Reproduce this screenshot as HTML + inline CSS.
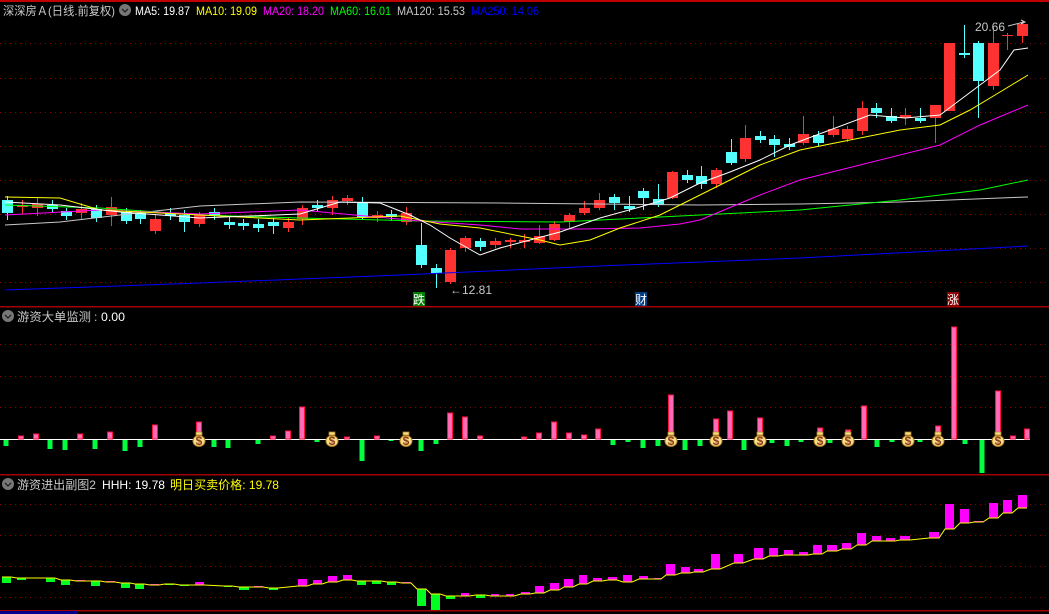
<!DOCTYPE html>
<html><head><meta charset="utf-8"><style>
html,body{margin:0;padding:0;background:#000;width:1049px;height:614px;overflow:hidden}
svg{display:block}
text{font-family:"Liberation Sans","Noto Sans CJK SC",sans-serif;font-size:12px}
</style></head><body>
<svg id="s" width="1049" height="614" xmlns="http://www.w3.org/2000/svg">
<rect width="1049" height="614" fill="#000"/>
<rect x="0" y="0" width="1049" height="2" fill="#c00000"/>
<g stroke="#900000" stroke-dasharray="1,4" stroke-width="1">
<line x1="0" y1="43.5" x2="1049" y2="43.5"/><line x1="0" y1="78.5" x2="1049" y2="78.5"/><line x1="0" y1="112.5" x2="1049" y2="112.5"/><line x1="0" y1="146.5" x2="1049" y2="146.5"/><line x1="0" y1="180.5" x2="1049" y2="180.5"/><line x1="0" y1="214.5" x2="1049" y2="214.5"/><line x1="0" y1="248.5" x2="1049" y2="248.5"/><line x1="0" y1="282.5" x2="1049" y2="282.5"/>
<line x1="0" y1="344.5" x2="1049" y2="344.5"/><line x1="0" y1="376.5" x2="1049" y2="376.5"/><line x1="0" y1="407.5" x2="1049" y2="407.5"/>
<line x1="0" y1="504.5" x2="1049" y2="504.5"/><line x1="0" y1="535.5" x2="1049" y2="535.5"/><line x1="0" y1="566.5" x2="1049" y2="566.5"/><line x1="0" y1="597.5" x2="1049" y2="597.5"/>
</g>
<rect x="0" y="306" width="1049" height="1.5" fill="#a00000"/>
<rect x="0" y="474" width="1049" height="1.5" fill="#a00000"/>
<rect x="0" y="610" width="1049" height="1.5" fill="#a00000"/>
<rect x="0" y="611" width="78" height="3" fill="#00008b"/>
<g id="main"></g>
<g id="p2"><line x1="0" y1="439.5" x2="1030" y2="439.5" stroke="#fff" stroke-width="1"/></g>
<g id="p3"></g>
<!-- headers -->
<text x="3" y="15" fill="#c8c8c8" font-size="13" textLength="112" lengthAdjust="spacingAndGlyphs">深深房Ａ(日线.前复权)</text>
<circle cx="125" cy="10" r="6" fill="#777"/><path d="M122 9l3 3 3-3" stroke="#222" fill="none" stroke-width="1.3"/>
<text x="135" y="15" fill="#fff" textLength="55" lengthAdjust="spacingAndGlyphs">MA5: 19.87</text>
<text x="196" y="15" fill="#ffff00" textLength="61" lengthAdjust="spacingAndGlyphs">MA10: 19.09</text>
<text x="263" y="15" fill="#ff00ff" textLength="61" lengthAdjust="spacingAndGlyphs">MA20: 18.20</text>
<text x="330" y="15" fill="#00ff00" textLength="61" lengthAdjust="spacingAndGlyphs">MA60: 16.01</text>
<text x="397" y="15" fill="#c8c8c8" textLength="68" lengthAdjust="spacingAndGlyphs">MA120: 15.53</text>
<text x="471" y="15" fill="#0000ff" textLength="68" lengthAdjust="spacingAndGlyphs">MA250: 14.06</text>
<circle cx="8" cy="316" r="6" fill="#777"/><path d="M5 315l3 3 3-3" stroke="#222" fill="none" stroke-width="1.3"/>
<text x="17" y="321" fill="#c8c8c8" font-size="13" textLength="74" lengthAdjust="spacingAndGlyphs">游资大单监测</text>
<text x="94" y="321" fill="#c8c8c8" font-size="13">:</text>
<text x="101" y="321" fill="#fff" font-size="13" textLength="24" lengthAdjust="spacingAndGlyphs">0.00</text>
<circle cx="8" cy="484" r="6" fill="#777"/><path d="M5 483l3 3 3-3" stroke="#222" fill="none" stroke-width="1.3"/>
<text x="17" y="489" fill="#c8c8c8" font-size="13" textLength="79" lengthAdjust="spacingAndGlyphs">游资进出副图2</text>
<text x="102" y="489" fill="#fff" font-size="13" textLength="63" lengthAdjust="spacingAndGlyphs">HHH: 19.78</text>
<text x="170" y="489" fill="#ffff00" font-size="13" textLength="109" lengthAdjust="spacingAndGlyphs">明日买卖价格: 19.78</text>
<!-- labels -->
<rect x="413" y="292" width="12" height="14" fill="#008000"/><text x="413" y="304" fill="#fff">跌</text>
<rect x="635" y="292" width="12" height="14" fill="#003c80"/><text x="635" y="304" fill="#fff">财</text>
<rect x="947" y="292" width="12" height="14" fill="#8b0000"/><text x="947" y="304" fill="#fff">涨</text>
<text x="450" y="294" fill="#c8c8c8">←12.81</text>
<text x="975" y="31" fill="#c8c8c8">20.66</text>
<path d="M1008 26l16-4m-3-2l4 2-4 2" stroke="#c8c8c8" fill="none"/>
</svg>
<script>
var NS="http://www.w3.org/2000/svg";
function el(p,t,a){var e=document.createElementNS(NS,t);for(var k in a)e.setAttribute(k,a[k]);document.getElementById(p).appendChild(e);return e;}
var R="#ff3232",C="#54ffff";
var cd=[
[7,C,200,213,196,220],[22,R,205,207,200,214],[37,R,204,208,198,216],[52,C,205,209,200,212],[66,C,211,216,208,220],
[81,R,209,213,203,220],[96,C,209,218,205,222],[111,R,207,215,197,226],[126,C,212,221,208,224],[140,C,213,219,210,224],
[155,R,219,231,215,234],[170,C,213,216,208,220],[184,C,215,222,210,232],[199,R,215,224,212,227],[214,C,212,216,208,220],
[229,C,222,225,217,229],[243,C,223,226,219,230],[258,C,224,228,219,232],[273,C,222,226,218,234],[288,R,222,228,218,232],
[302,R,208,219,205,225],[317,C,205,208,200,211],[332,R,200,208,196,215],[347,R,198,201,195,205],[362,C,203,217,197,220],
[377,R,215,218,211,222],[391,C,214,217,210,221],[406,R,213,222,207,225],[421,C,245,265,223,268],[436,C,268,273,264,288],
[450,R,250,282,248,284],[465,R,238,248,236,252],[480,C,241,247,238,251],[495,R,241,245,238,248],[510,R,240,242,238,248],
[524,R,240,242,234,248],[539,R,236,243,225,244],[554,R,224,240,221,241],[569,R,215,222,213,228],[584,R,208,213,201,215],
[599,R,200,208,193,210],[614,C,197,203,194,210],[629,C,206,209,196,212],[643,C,191,198,188,210],[658,C,199,205,184,207],
[672,R,172,198,171,199],[687,C,175,180,170,183],[701,C,176,184,166,189],[716,R,170,184,168,188],[731,C,152,163,139,165],
[745,R,138,159,125,162],[760,C,136,140,131,143],[774,C,139,145,135,157],[789,C,144,147,138,150],[803,R,134,143,116,145],
[818,C,135,143,131,146],[833,R,129,135,116,137],[847,R,129,139,126,142],[862,R,108,131,101,135],[876,C,108,113,103,118],
[891,C,116,121,108,123],[905,R,115,118,108,125],[920,C,118,121,108,123],[935,R,105,118,105,143],[949,R,43,111,43,111],
[964,C,53,55,25,58],[978,C,43,81,41,118],[993,R,43,86,27,90],[1007,R,35,36,33,50],[1022,R,24,36,21,43]];
cd.forEach(function(c){var x=c[0];
el("main","line",{x1:x+.5,x2:x+.5,y1:c[4],y2:c[5],stroke:c[1],"stroke-width":1});
el("main","rect",{x:x-5,y:c[2],width:11,height:Math.max(1,c[3]-c[2]),fill:c[1]});});
function pl(pts,col){el("main","polyline",{points:pts,fill:"none",stroke:col,"stroke-width":1});}
pl("5,290 200,283 400,275 600,266 800,258 1028,246","#0000ff");
pl("5,225 60,222 120,215 200,206 300,202 500,203 700,205 800,204 900,202 1000,198 1028,197","#c8c8c8");
pl("5,205 100,208 200,215 300,218 420,221 560,222 600,220 680,216 800,210 900,200 980,190 1028,180","#00ff00");
pl("5,215 100,210 200,214 300,210 420,221 480,225 520,229 580,229 640,228 680,224 700,220 760,195 800,180 860,165 940,145 980,125 1028,105","#ff00ff");
pl("5,197 60,198 100,210 200,215 300,220 400,216 440,224 480,228 540,240 560,245 590,240 620,228 660,215 680,205 720,185 760,165 800,150 850,140 900,130 940,125 970,110 1000,92 1028,75","#ffff00");
pl("5,202 60,205 120,212 200,218 300,214 340,202 380,203 410,215 430,225 450,238 480,255 500,248 530,240 560,232 600,218 640,207 670,198 700,183 730,172 760,160 790,145 830,130 870,115 905,118 940,115 960,100 980,85 1000,70 1014,50 1028,48","#ffffff");
var b2=[[6,-6],[21,3],[36,5],[50,-9],[65,-10],[80,5],[95,-9],[110,7],[125,-11],[140,-7],[155,14],[199,17,1],[214,-7],[228,-8],[258,-4],[273,3],[288,8],[302,32],[317,-2],[332,2,1],[347,2],[362,-21],[377,3],[391,-1],[406,2,1],[421,-11],[436,-4],[450,26],[465,22],[480,3],[524,2],[539,6],[554,17],[569,6],[584,4],[598,10],[613,-5],[628,-2],[643,-8],[658,-6],[671,44,1],[685,-10],[700,-6],[716,20,1],[730,28],[744,-10],[760,21,1],[772,-3],[787,-6],[801,-2],[820,11,1],[830,-3],[848,9,1],[864,33],[877,-7],[892,-2],[908,1,1],[920,-2],[938,13,1],[954,112],[965,-4],[982,-33],[998,48,1],[1013,3],[1027,10]];
b2.forEach(function(b){var x=b[0],h=b[1];
if(h>0){el("p2","rect",{x:x-2.5,y:439-h,width:5,height:h,fill:"#ff6ab4",stroke:"#ff1040","stroke-width":1});}
else{el("p2","rect",{x:x-2.5,y:440,width:5,height:-h,fill:"#00ff40"});}
if(b[2]){el("p2","ellipse",{cx:x,cy:441,rx:6,ry:5.5,fill:"#f8e08a",stroke:"#b08020","stroke-width":1});
el("p2","rect",{x:x-3,y:432,width:6,height:3,fill:"#f8e08a",stroke:"#b08020","stroke-width":0.8});
var t=el("p2","text",{x:x,y:445,fill:"#8b3a1a","font-size":"9","text-anchor":"middle","font-weight":"bold"});t.textContent="$";}});
var G="#00ff20",M="#ff00ff";
var b3=[[2,11,G,577,583],[17,26,G,578,580],[46,55,G,578,582],[61,70,G,580,585],[76,85,M,580,581],[91,100,G,581,586],[106,115,M,581,582],[121,130,G,583,588],[135,144,G,584,589],[150,159,M,584,585],[165,174,G,584,585],[180,189,G,585,586],[195,204,M,582,585],[224,232,G,586,587],[239,249,G,587,590],[254,263,M,586,587],[269,278,G,588,590],[298,307,M,579,586],[313,322,M,580,584],[328,337,M,576,582],[343,352,M,575,580],[357,366,G,581,585],[372,381,G,581,584],[387,396,G,582,585],[402,411,M,582,583],[417,426,G,589,606],[431,440,G,594,610],[446,455,G,596,599],[461,469,M,593,596],[476,485,G,595,598],[491,499,M,594,596],[506,514,M,594,596],[521,530,M,592,594],[535,544,M,586,593],[550,559,M,583,590],[564,573,M,579,587],[579,587,M,575,584],[593,602,M,578,581],[608,617,M,577,580],[623,632,M,575,582],[639,648,M,576,579],[654,661,M,578,579],[666,675,M,564,575],[681,690,M,567,573],[694,703,M,569,572],[711,720,M,554,569],[734,743,M,554,563],[754,763,M,548,559],[769,778,M,548,556],[784,793,M,550,555],[799,808,M,552,555],[813,822,M,545,554],[827,837,M,545,551],[842,851,M,543,549],[857,866,M,533,545],[872,881,M,536,541],[886,895,M,538,541],[900,910,M,536,540],[929,939,M,532,538],[945,954,M,504,529],[960,969,M,509,523],[974,983,M,521,522],[989,998,M,503,518],[1003,1012,M,500,513],[1018,1027,M,495,508]];
var pts=[];
b3.forEach(function(b){el("p3","rect",{x:b[0],y:b[3],width:b[1]-b[0],height:Math.max(1,b[4]-b[3]),fill:b[2]});
var ly=b[2]==M?b[4]:b[3];pts.push(b[0]+","+ly);pts.push(b[1]+","+ly);});
el("p3","polyline",{points:pts.join(" "),fill:"none",stroke:"#ffff00","stroke-width":1});
</script>
</body></html>
